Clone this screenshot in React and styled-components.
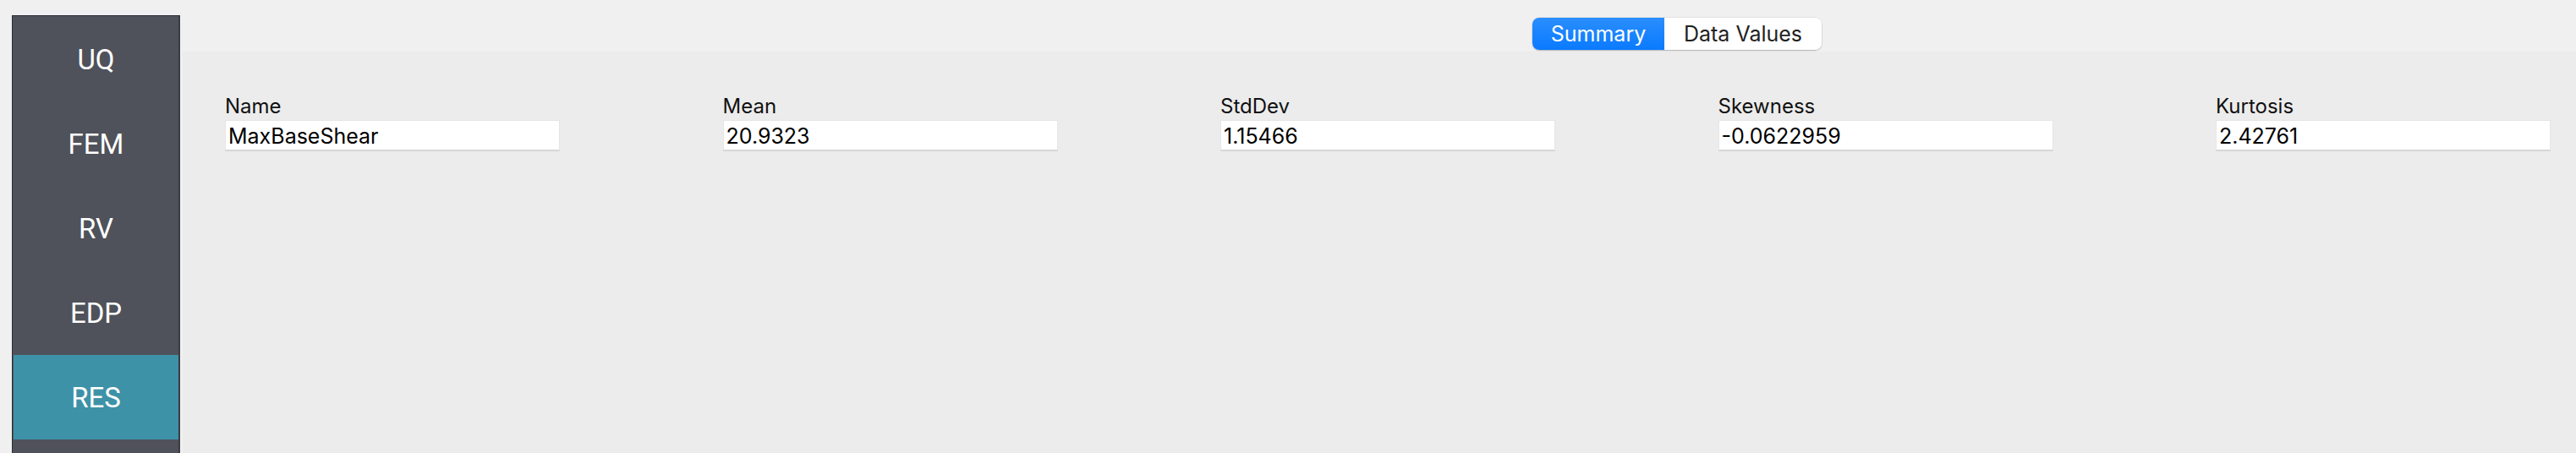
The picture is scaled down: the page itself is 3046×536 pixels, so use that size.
import React from "react";
import styled, { createGlobalStyle } from "styled-components";

const Global = createGlobalStyle`
  html, body { margin: 0; padding: 0; }
  body { background: #f0f0f0; font-family: Inter, "Liberation Sans", sans-serif; }
`;

const Window = styled.div`
  display: flex;
  width: 3046px;
  height: 536px;
  overflow: hidden;
  background: #f0f0f0;
`;

const Sidebar = styled.nav`
  box-sizing: border-box;
  margin: 18px 0 0 14px;
  width: 199px;
  flex: none;
  display: flex;
  flex-direction: column;
  padding: 1px 0 0 1px;
  background: #4f525a;
  border-top: 1px solid #2c2e33;
  border-left: 1px solid #2c2e33;
  border-right: 2px solid #3a3c41;
  height: 540px;
`;

const NavButton = styled.div`
  height: 100px;
  flex: none;
  display: flex;
  align-items: center;
  justify-content: center;
  color: #ffffff;
  font-family: Roboto, "Liberation Sans", sans-serif;
  font-size: 33px;
  background: ${(p) => (p.$active ? "#3e92a8" : "transparent")};
`;

const Main = styled.div`
  flex: 1;
  margin-left: 3px;
  display: flex;
  flex-direction: column;
`;

const TabBar = styled.div`
  height: 61px;
  box-sizing: border-box;
  padding: 21px 0 0 1596px;
  display: flex;
  align-items: flex-start;
`;

const TabGroup = styled.div`
  display: flex;
  height: 38px;
  border-radius: 8px;
  background: #ffffff;
  box-shadow: 0 0 0 0.5px rgba(0, 0, 0, 0.12), 0 1px 1.5px rgba(0, 0, 0, 0.22);
  overflow: hidden;
`;

const Tab = styled.div`
  display: flex;
  align-items: center;
  justify-content: center;
  width: ${(p) => p.$w}px;
  font-size: 25px;
  color: ${(p) => (p.$active ? "#ffffff" : "#222222")};
  background: ${(p) =>
    p.$active ? "linear-gradient(#2a8efe, #0a7aff)" : "#ffffff"};
`;

const Panel = styled.div`
  flex: 1;
  background: #ececec;
  padding: 50px 0 0 50px;
  display: flex;
  gap: 192.5px;
  align-items: flex-start;
`;

const Field = styled.div`
  width: 396px;
  display: flex;
  flex-direction: column;
  gap: 2px;
`;

const Label = styled.div`
  font-size: 24px;
  line-height: 29px;
  color: #111111;
`;

const ValueBox = styled.div`
  box-sizing: border-box;
  height: 37px;
  background: #ffffff;
  border: 1px solid #e6e6e6;
  border-bottom: 2px solid #d6d6d6;
  padding: 3px 0 0 3px;
  font-size: 25px;
  line-height: 31px;
  color: #000000;
  white-space: nowrap;
  overflow: hidden;
`;

const nav = ["UQ", "FEM", "RV", "EDP", "RES"];
const stats = [
  ["Name", "MaxBaseShear"],
  ["Mean", "20.9323"],
  ["StdDev", "1.15466"],
  ["Skewness", "-0.0622959"],
  ["Kurtosis", "2.42761"],
];

export default function App() {
  return (
    <>
      <Global />
      <Window>
        <Sidebar>
          {nav.map((n) => (
            <NavButton key={n} $active={n === "RES"}>
              {n}
            </NavButton>
          ))}
        </Sidebar>
        <Main>
          <TabBar>
            <TabGroup>
              <Tab $active $w={156}>Summary</Tab>
              <Tab $w={186}>Data Values</Tab>
            </TabGroup>
          </TabBar>
          <Panel>
            {stats.map(([l, v]) => (
              <Field key={l}>
                <Label>{l}</Label>
                <ValueBox>{v}</ValueBox>
              </Field>
            ))}
          </Panel>
        </Main>
      </Window>
    </>
  );
}
